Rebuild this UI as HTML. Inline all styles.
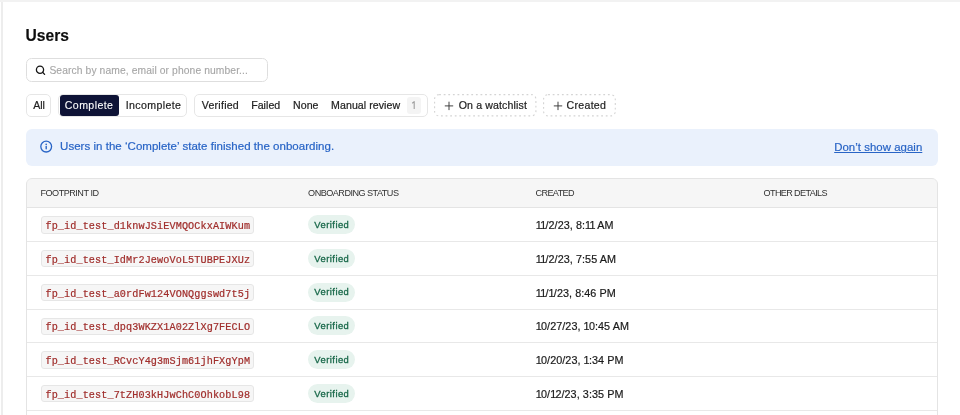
<!DOCTYPE html>
<html><head><meta charset="utf-8"><title>Users</title>
<style>
html,body{margin:0;padding:0;width:960px;height:415px;overflow:hidden;background:#fff;}
.t{position:absolute;white-space:nowrap;-webkit-text-stroke:0.2px currentColor;}
.b{position:absolute;}
</style></head><body>
<div style="position:absolute;left:0;top:0;width:960px;height:415px;will-change:transform;">
<div class="b" style="left:0px;top:0px;width:960.00px;height:2.00px;background:#f2f2f2;"></div>
<div class="b" style="left:1px;top:2px;width:2.00px;height:413.00px;background:#ededed;"></div>
<div class="t" id="users" style="left:25.58px;top:27.89px;font-size:15.6px;line-height:15.6px;color:#0d0d0d;font-weight:700;letter-spacing:0.025px;font-family:'Liberation Sans', sans-serif;-webkit-text-stroke:0.15px #0d0d0d;">Users</div>
<div class="b" style="left:25.6px;top:58.4px;width:242.40px;height:23.60px;border:1px solid #dedede;border-radius:5.5px;box-sizing:border-box;"></div>
<svg class="b" style="left:34px;top:64px" width="12" height="12" viewBox="0 0 12 12"><circle cx="6" cy="5.7" r="3.6" fill="none" stroke="#151515" stroke-width="1.3"/><path d="M8.6 8.3 L10.6 10.4" stroke="#151515" stroke-width="1.3" stroke-linecap="round"/></svg>
<div class="t" id="search" style="left:49.40px;top:66.18px;font-size:10.3px;line-height:10.3px;color:#a6a6a6;font-weight:400;letter-spacing:0.100px;font-family:'Liberation Sans', sans-serif;-webkit-text-stroke:0.12px #a6a6a6;">Search by name, email or phone number...</div>
<div class="b" style="left:25.6px;top:94px;width:25.80px;height:22.60px;border:1px solid #e6e6e6;border-radius:5px;box-sizing:border-box;background:#fff;"></div>
<div class="t" id="all" style="left:33.23px;top:99.73px;font-size:10.6px;line-height:10.6px;color:#222;font-weight:400;letter-spacing:-0.011px;font-family:'Liberation Sans', sans-serif;">All</div>
<div class="b" style="left:57.8px;top:94px;width:129.60px;height:22.60px;border:1px solid #e6e6e6;border-radius:5px;box-sizing:border-box;background:#fff;"></div>
<div class="b" style="left:59.7px;top:95.2px;width:59.10px;height:20.40px;background:#0e1336;border-radius:3px;"></div>
<div class="t" id="complete" style="left:64.78px;top:99.73px;font-size:10.6px;line-height:10.6px;color:#ffffff;font-weight:400;letter-spacing:0.412px;font-family:'Liberation Sans', sans-serif;-webkit-text-stroke:0.08px #fff;">Complete</div>
<div class="t" id="incomplete" style="left:125.75px;top:99.73px;font-size:10.6px;line-height:10.6px;color:#222;font-weight:400;letter-spacing:0.374px;font-family:'Liberation Sans', sans-serif;">Incomplete</div>
<div class="b" style="left:194.1px;top:94px;width:234.10px;height:22.60px;border:1px solid #e6e6e6;border-radius:5px;box-sizing:border-box;background:#fff;"></div>
<div class="t" id="verified" style="left:201.75px;top:99.73px;font-size:10.6px;line-height:10.6px;color:#222;font-weight:400;letter-spacing:0.239px;font-family:'Liberation Sans', sans-serif;">Verified</div>
<div class="t" id="failed" style="left:251.18px;top:99.73px;font-size:10.6px;line-height:10.6px;color:#222;font-weight:400;letter-spacing:0.045px;font-family:'Liberation Sans', sans-serif;">Failed</div>
<div class="t" id="none" style="left:293.01px;top:99.73px;font-size:10.6px;line-height:10.6px;color:#222;font-weight:400;letter-spacing:0.062px;font-family:'Liberation Sans', sans-serif;">None</div>
<div class="t" id="manual" style="left:331.11px;top:99.73px;font-size:10.6px;line-height:10.6px;color:#222;font-weight:400;letter-spacing:0.059px;font-family:'Liberation Sans', sans-serif;">Manual review</div>
<div class="b" style="left:407px;top:97.2px;width:14.00px;height:16.80px;background:#f4f4f4;border-radius:3px;"></div>
<svg class="b" style="left:407px;top:97px" width="14" height="17" viewBox="0 0 14 17"><path d="M5.2 6.2L7.2 4.7V12" fill="none" stroke="#9d9d9d" stroke-width="1.1" stroke-linejoin="round"/></svg>
<svg class="b" style="left:434px;top:94px" width="102.5" height="22.5" viewBox="0 0 102.5 22.5"><rect x="0.6" y="0.6" width="101.3" height="21.3" rx="4.5" fill="none" stroke="#d4d4d4" stroke-width="1.1" stroke-dasharray="1.8 2.8"/></svg>
<svg class="b" style="left:444.1px;top:100.8px" width="10" height="10" viewBox="0 0 10 10"><path d="M5 0.7V9.1M0.8 4.9H9.2" stroke="#3a3a3a" stroke-width="0.95"/></svg>
<div class="t" id="watch" style="left:458.70px;top:99.73px;font-size:10.6px;line-height:10.6px;color:#222;font-weight:400;letter-spacing:0.128px;font-family:'Liberation Sans', sans-serif;">On a watchlist</div>
<svg class="b" style="left:542.7px;top:94px" width="72.9" height="22.5" viewBox="0 0 72.9 22.5"><rect x="0.6" y="0.6" width="71.7" height="21.3" rx="4.5" fill="none" stroke="#d4d4d4" stroke-width="1.1" stroke-dasharray="1.8 2.8"/></svg>
<svg class="b" style="left:552.9px;top:100.8px" width="10" height="10" viewBox="0 0 10 10"><path d="M5 0.7V9.1M0.8 4.9H9.2" stroke="#3a3a3a" stroke-width="0.95"/></svg>
<div class="t" id="created" style="left:566.51px;top:99.73px;font-size:10.6px;line-height:10.6px;color:#222;font-weight:400;letter-spacing:0.291px;font-family:'Liberation Sans', sans-serif;">Created</div>
<div class="b" style="left:25.8px;top:129px;width:912.20px;height:37.00px;background:#eaf1fc;border-radius:6px;"></div>
<svg class="b" style="left:39px;top:140px" width="14" height="14" viewBox="0 0 14 14"><circle cx="7.2" cy="6.6" r="5.4" fill="none" stroke="#2864c6" stroke-width="1.3"/><circle cx="7.2" cy="4.4" r="0.8" fill="#2864c6"/><path d="M7.2 6.4V8.8" stroke="#2864c6" stroke-width="1.4" stroke-linecap="round"/></svg>
<div class="t" id="banner" style="left:60.08px;top:141.17px;font-size:11.5px;line-height:11.5px;color:#2864c6;font-weight:400;letter-spacing:0.028px;font-family:'Liberation Sans', sans-serif;">Users in the ‘Complete’ state finished the onboarding.</div>
<div class="t" id="link" style="left:834.19px;top:142.25px;font-size:11.4px;line-height:11.4px;color:#2864c6;font-weight:400;letter-spacing:0.045px;font-family:'Liberation Sans', sans-serif;text-decoration:underline;text-underline-offset:1px;text-decoration-thickness:0.9px;">Don’t show again</div>
<div class="b" style="left:27px;top:179px;width:910.00px;height:28.50px;background:#f6f6f6;border-radius:5px 5px 0 0;"></div>
<div class="b" style="left:25.6px;top:178.1px;width:912.40px;height:251.90px;border:1px solid #e4e4e4;border-radius:6px;box-sizing:border-box;"></div>
<div class="b" style="left:27px;top:207px;width:910.00px;height:1.00px;background:#e4e4e4;"></div>
<div class="t" id="h1" style="left:40.42px;top:189.00px;font-size:9.1px;line-height:9.1px;color:#303030;font-weight:400;letter-spacing:-0.493px;font-family:'Liberation Sans', sans-serif;-webkit-text-stroke:0;">FOOTPRINT ID</div>
<div class="t" id="h2" style="left:308.08px;top:189.00px;font-size:9.1px;line-height:9.1px;color:#303030;font-weight:400;letter-spacing:-0.519px;font-family:'Liberation Sans', sans-serif;-webkit-text-stroke:0;">ONBOARDING STATUS</div>
<div class="t" id="h3" style="left:535.49px;top:189.00px;font-size:9.1px;line-height:9.1px;color:#303030;font-weight:400;letter-spacing:-0.605px;font-family:'Liberation Sans', sans-serif;-webkit-text-stroke:0;">CREATED</div>
<div class="t" id="h4" style="left:763.53px;top:189.00px;font-size:9.1px;line-height:9.1px;color:#303030;font-weight:400;letter-spacing:-0.630px;font-family:'Liberation Sans', sans-serif;-webkit-text-stroke:0;">OTHER DETAILS</div>
<div class="b" style="left:27px;top:241.0px;width:910.00px;height:1.00px;background:#e8e8e8;"></div>
<div class="b" style="left:41.3px;top:216.45px;width:212.60px;height:17.30px;background:#f6f6f6;border:1px solid #e6e6e6;border-radius:3px;box-sizing:border-box;"></div>
<div class="t" id="code0" style="left:45.45px;top:222.14px;font-size:10.17px;line-height:10.17px;color:#a02d2b;font-weight:400;letter-spacing:0.107px;font-family:'Liberation Mono', monospace;">fp_id_test_d1knwJSiEVMQOCkxAIWKum</div>
<div class="b" style="left:308.3px;top:215.15px;width:46.50px;height:18.90px;background:#e7f3ee;border-radius:10px;"></div>
<div class="t" id="ver0" style="left:314.29px;top:219.99px;font-size:9.4px;line-height:9.4px;color:#19694a;font-weight:400;letter-spacing:0.468px;font-family:'Liberation Sans', sans-serif;-webkit-text-stroke:0.32px #19694a;">Verified</div>
<div class="t" id="date0" style="left:535.72px;top:220.21px;font-size:10.8px;line-height:10.8px;color:#1a1a1a;font-weight:400;letter-spacing:0.064px;font-family:'Liberation Sans', sans-serif;"><span style="letter-spacing:-0.736px">1</span><span style="letter-spacing:-0.736px">1</span>/2/23, 8:<span style="letter-spacing:-0.736px">1</span><span style="letter-spacing:-0.736px">1</span> AM</div>
<div class="b" style="left:27px;top:274.75px;width:910.00px;height:1.00px;background:#e8e8e8;"></div>
<div class="b" style="left:41.3px;top:250.2px;width:212.60px;height:17.30px;background:#f6f6f6;border:1px solid #e6e6e6;border-radius:3px;box-sizing:border-box;"></div>
<div class="t" id="code1" style="left:45.45px;top:255.89px;font-size:10.17px;line-height:10.17px;color:#a02d2b;font-weight:400;letter-spacing:0.107px;font-family:'Liberation Mono', monospace;">fp_id_test_IdMr2JewoVoL5TUBPEJXUz</div>
<div class="b" style="left:308.3px;top:248.9px;width:46.50px;height:18.90px;background:#e7f3ee;border-radius:10px;"></div>
<div class="t" id="ver1" style="left:314.29px;top:253.74px;font-size:9.4px;line-height:9.4px;color:#19694a;font-weight:400;letter-spacing:0.468px;font-family:'Liberation Sans', sans-serif;-webkit-text-stroke:0.32px #19694a;">Verified</div>
<div class="t" id="date1" style="left:535.72px;top:253.96px;font-size:10.8px;line-height:10.8px;color:#1a1a1a;font-weight:400;letter-spacing:0.064px;font-family:'Liberation Sans', sans-serif;"><span style="letter-spacing:-0.736px">1</span><span style="letter-spacing:-0.736px">1</span>/2/23, 7:55 AM</div>
<div class="b" style="left:27px;top:308.5px;width:910.00px;height:1.00px;background:#e8e8e8;"></div>
<div class="b" style="left:41.3px;top:283.95px;width:212.60px;height:17.30px;background:#f6f6f6;border:1px solid #e6e6e6;border-radius:3px;box-sizing:border-box;"></div>
<div class="t" id="code2" style="left:45.45px;top:289.64px;font-size:10.17px;line-height:10.17px;color:#a02d2b;font-weight:400;letter-spacing:0.107px;font-family:'Liberation Mono', monospace;">fp_id_test_a0rdFw124VONQggswd7t5j</div>
<div class="b" style="left:308.3px;top:282.65px;width:46.50px;height:18.90px;background:#e7f3ee;border-radius:10px;"></div>
<div class="t" id="ver2" style="left:314.29px;top:287.49px;font-size:9.4px;line-height:9.4px;color:#19694a;font-weight:400;letter-spacing:0.468px;font-family:'Liberation Sans', sans-serif;-webkit-text-stroke:0.32px #19694a;">Verified</div>
<div class="t" id="date2" style="left:535.72px;top:287.71px;font-size:10.8px;line-height:10.8px;color:#1a1a1a;font-weight:400;letter-spacing:0.064px;font-family:'Liberation Sans', sans-serif;"><span style="letter-spacing:-0.736px">1</span><span style="letter-spacing:-0.736px">1</span>/<span style="letter-spacing:-0.736px">1</span>/23, 8:46 PM</div>
<div class="b" style="left:27px;top:342.25px;width:910.00px;height:1.00px;background:#e8e8e8;"></div>
<div class="b" style="left:41.3px;top:317.7px;width:212.60px;height:17.30px;background:#f6f6f6;border:1px solid #e6e6e6;border-radius:3px;box-sizing:border-box;"></div>
<div class="t" id="code3" style="left:45.45px;top:323.39px;font-size:10.17px;line-height:10.17px;color:#a02d2b;font-weight:400;letter-spacing:0.107px;font-family:'Liberation Mono', monospace;">fp_id_test_dpq3WKZX1A02ZlXg7FECLO</div>
<div class="b" style="left:308.3px;top:316.4px;width:46.50px;height:18.90px;background:#e7f3ee;border-radius:10px;"></div>
<div class="t" id="ver3" style="left:314.29px;top:321.24px;font-size:9.4px;line-height:9.4px;color:#19694a;font-weight:400;letter-spacing:0.468px;font-family:'Liberation Sans', sans-serif;-webkit-text-stroke:0.32px #19694a;">Verified</div>
<div class="t" id="date3" style="left:535.72px;top:321.46px;font-size:10.8px;line-height:10.8px;color:#1a1a1a;font-weight:400;letter-spacing:0.064px;font-family:'Liberation Sans', sans-serif;"><span style="letter-spacing:-0.736px">1</span>0/27/23, <span style="letter-spacing:-0.736px">1</span>0:45 AM</div>
<div class="b" style="left:27px;top:376.0px;width:910.00px;height:1.00px;background:#e8e8e8;"></div>
<div class="b" style="left:41.3px;top:351.45px;width:212.60px;height:17.30px;background:#f6f6f6;border:1px solid #e6e6e6;border-radius:3px;box-sizing:border-box;"></div>
<div class="t" id="code4" style="left:45.45px;top:357.14px;font-size:10.17px;line-height:10.17px;color:#a02d2b;font-weight:400;letter-spacing:0.107px;font-family:'Liberation Mono', monospace;">fp_id_test_RCvcY4g3mSjm61jhFXgYpM</div>
<div class="b" style="left:308.3px;top:350.15px;width:46.50px;height:18.90px;background:#e7f3ee;border-radius:10px;"></div>
<div class="t" id="ver4" style="left:314.29px;top:354.99px;font-size:9.4px;line-height:9.4px;color:#19694a;font-weight:400;letter-spacing:0.468px;font-family:'Liberation Sans', sans-serif;-webkit-text-stroke:0.32px #19694a;">Verified</div>
<div class="t" id="date4" style="left:535.72px;top:355.21px;font-size:10.8px;line-height:10.8px;color:#1a1a1a;font-weight:400;letter-spacing:0.064px;font-family:'Liberation Sans', sans-serif;"><span style="letter-spacing:-0.736px">1</span>0/20/23, <span style="letter-spacing:-0.736px">1</span>:34 PM</div>
<div class="b" style="left:27px;top:409.75px;width:910.00px;height:1.00px;background:#e8e8e8;"></div>
<div class="b" style="left:41.3px;top:385.2px;width:212.60px;height:17.30px;background:#f6f6f6;border:1px solid #e6e6e6;border-radius:3px;box-sizing:border-box;"></div>
<div class="t" id="code5" style="left:45.45px;top:390.89px;font-size:10.17px;line-height:10.17px;color:#a02d2b;font-weight:400;letter-spacing:0.107px;font-family:'Liberation Mono', monospace;">fp_id_test_7tZH03kHJwChC0OhkobL98</div>
<div class="b" style="left:308.3px;top:383.9px;width:46.50px;height:18.90px;background:#e7f3ee;border-radius:10px;"></div>
<div class="t" id="ver5" style="left:314.29px;top:388.74px;font-size:9.4px;line-height:9.4px;color:#19694a;font-weight:400;letter-spacing:0.468px;font-family:'Liberation Sans', sans-serif;-webkit-text-stroke:0.32px #19694a;">Verified</div>
<div class="t" id="date5" style="left:535.72px;top:388.96px;font-size:10.8px;line-height:10.8px;color:#1a1a1a;font-weight:400;letter-spacing:0.064px;font-family:'Liberation Sans', sans-serif;"><span style="letter-spacing:-0.736px">1</span>0/<span style="letter-spacing:-0.736px">1</span>2/23, 3:35 PM</div>
</div></body></html>
